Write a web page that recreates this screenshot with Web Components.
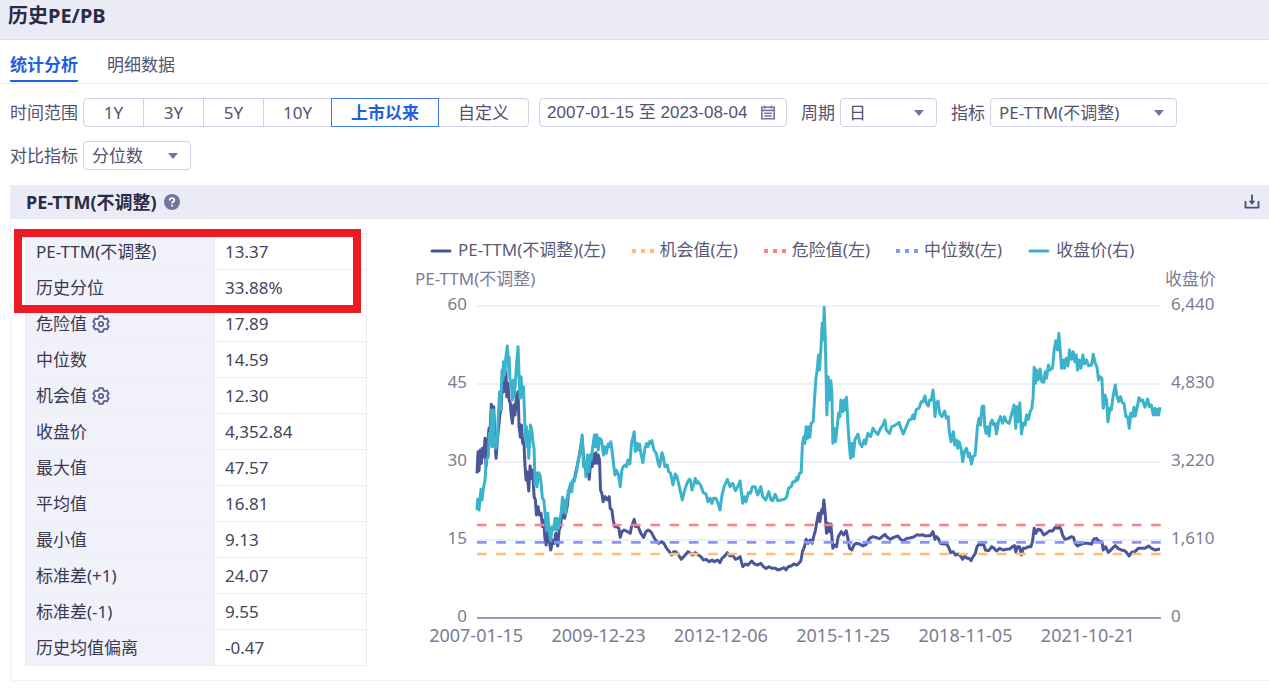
<!DOCTYPE html>
<html lang="zh-CN">
<head>
<meta charset="utf-8">
<meta name="viewport" content="width=device-width, initial-scale=1">
<title>历史PE/PB</title>
<style>
	body {
		margin: 0;
		background: #fff;
		color: #53536f;
		font: 17px/24px "Noto Sans", "Noto Sans CJK SC", sans-serif;
		--ink: #2b2b45;
		--blue: #1f5fe0;
		--line: #d2d0e6;
		--soft: #ebebf5;
		--icon: #74749f;
	}
</style>
</head>
<body>
<pe-page>
	<tab-bar slot="tabs" items="统计分析,明细数据" value="统计分析"></tab-bar>
	<range-group slot="filters" label="时间范围" items="1Y,3Y,5Y,10Y,上市以来,自定义" value="上市以来">
		<date-range value="2007-01-15 至 2023-08-04"></date-range>
	</range-group>
	<drop-down slot="filters" label="周期" value="日" style="--width:97px"></drop-down>
	<drop-down slot="filters" label="指标" value="PE-TTM(不调整)" style="--width:187px"></drop-down>
	<drop-down slot="filters" label="对比指标" value="分位数" style="--width:108px"></drop-down>
	<data-panel heading="PE-TTM(不调整)">
		<stat-table></stat-table>
		<trend-chart></trend-chart>
	</data-panel>
</pe-page>

<script>
class BaseElement extends HTMLElement {
	constructor() {
		super()
		this.attachShadow({mode:'open'})
	}
	connectedCallback() {
		this.shadowRoot.innerHTML = this.render()
	}
	attr(name) {
		return this.getAttribute(name) || ''
	}
	list(name) {
		return this.attr(name).split(',')
	}
}

customElements.define('pe-page', class extends BaseElement {
	render() {
		return /*html*/`
<style>
	:host { display: block; }
	header {
		padding: 4px 8px 11px;
		background: var(--soft);
		border-bottom: 1px solid #dfdfe9;
	}
	h1 {
		margin: 0;
		color: var(--ink);
		font-size: 20px;
		line-height: 24px;
	}
	.filters {
		display: flex;
		flex-wrap: wrap;
		gap: 14px;
		padding: 14px 10px 15px;
	}
	main { padding-left: 10px; }
</style>
<header><h1>历史PE/PB</h1></header>
<slot name="tabs"></slot>
<div class="filters"><slot name="filters"></slot></div>
<main><slot></slot></main>`
	}
})

customElements.define('tab-bar', class extends BaseElement {
	render() {
		return /*html*/`
<style>
	:host {
		display: block;
		border-bottom: 1px solid #ececf3;
	}
	nav {
		display: flex;
		gap: 29px;
		padding: 13px 10px 1px;
	}
	a {
		padding-bottom: 3px;
		border-bottom: 2px solid transparent;
		color: inherit;
		text-decoration: none;
	}
	a[aria-current] {
		color: var(--blue);
		border-color: var(--blue);
		border-radius: 1px;
		font-weight: bold;
	}
</style>
<nav>${this.list('items').map(t => `<a href="#"${
	t === this.attr('value') ? ' aria-current="page"' : ''}>${t}</a>`).join('')}</nav>`
	}
})

customElements.define('range-group', class extends BaseElement {
	render() {
		return /*html*/`
<style>
	:host {
		display: flex;
		align-items: center;
		gap: 10px;
	}
	.field {
		display: flex;
		align-items: center;
		gap: 5px;
	}
	.group { display: flex; }
	button {
		min-width: 61px;
		height: 29px;
		margin: 0 0 0 -1px;
		padding: 0 19px;
		border: 1px solid var(--line);
		background: #fff;
		color: inherit;
		font: inherit;
		line-height: 24px;
		white-space: nowrap;
	}
	button:first-child { margin-left: 0; border-radius: 4px 0 0 4px; }
	button:last-child { border-radius: 0 4px 4px 0; }
	button[aria-pressed=true] {
		position: relative;
		border-color: #3f7be0;
		color: var(--blue);
		font-weight: bold;
	}
</style>
<div class="field">
	<span id="label">${this.attr('label')}</span>
	<div class="group" role="group" aria-labelledby="label">${
		this.list('items').map(t => `<button type="button" aria-pressed="${t === this.attr('value')}">${t}</button>`).join('')
	}</div>
</div>
<slot></slot>`
	}
})

customElements.define('date-range', class extends BaseElement {
	render() {
		return /*html*/`
<style>
	:host {
		box-sizing: border-box;
		display: flex;
		align-items: center;
		width: 248px;
		height: 29px;
		padding: 0 10px 0 7px;
		border: 1px solid var(--line);
		border-radius: 4px;
	}
	input {
		flex: 1;
		min-width: 0;
		padding: 0;
		border: 0;
		outline: 0;
		background: none;
		color: inherit;
		font: 17px/24px "Liberation Sans", "Noto Sans CJK SC", sans-serif;
	}
	svg { width: 16px; height: 16px; }
</style>
<input type="text" aria-label="日期范围" value="${this.attr('value')}">
<svg viewBox="0 0 16 16" fill="none" stroke="var(--icon)">
	<path stroke-width="1.6" d="M1.800 2.300h12.400v11.400H1.800z"/>
	<path stroke-width="1.600" d="M1.800 5.400h12.400M4.700 .6v3M11.300 .6v3M4.200 8.300h7.600M4.200 11h7.600"/>
</svg>`
	}
})

customElements.define('drop-down', class extends BaseElement {
	render() {
		return /*html*/`
<style>
	:host {
		display: flex;
		align-items: center;
		gap: 5px;
	}
	.box {
		display: grid;
		align-items: center;
		width: var(--width);
	}
	select, svg { grid-area: 1/1; }
	select {
		appearance: none;
		width: 100%;
		height: 29px;
		padding: 0 26px 0 8px;
		border: 1px solid var(--line);
		border-radius: 4px;
		background: #fff;
		color: inherit;
		font: inherit;
		line-height: 24px;
	}
	svg {
		justify-self: end;
		width: 10px;
		height: 6px;
		margin-right: 13px;
		fill: var(--icon);
		pointer-events: none;
	}
</style>
<label for="select">${this.attr('label')}</label>
<div class="box">
	<select id="select"><option>${this.attr('value')}</option></select>
	<svg viewBox="0 0 10 6"><path d="M0 0h10L5 6z"/></svg>
</div>`
	}
})

customElements.define('data-panel', class extends BaseElement {
	render() {
		return /*html*/`
<style>
	:host {
		display: block;
		border: 1px solid #f0f0f7;
		border-width: 0 0 1px 1px;
		border-radius: 0 0 0 4px;
	}
	header {
		display: flex;
		align-items: center;
		gap: 7px;
		height: 34px;
		padding: 0 9px 0 15px;
		background: var(--soft);
	}
	h2 {
		margin: 0;
		color: var(--ink);
		font-size: 18px;
		line-height: 24px;
	}
	button {
		display: flex;
		padding: 0;
		border: 0;
		background: none;
	}
	button:last-child { margin-left: auto; }
	svg { width: 16px; height: 16px; }
	.body {
		display: flex;
		align-items: flex-start;
	}
</style>
<header>
	<h2>${this.attr('heading')}</h2>
	<button type="button" aria-label="说明">
		<svg viewBox="0 0 16 16">
			<circle cx="8" cy="8" r="8" fill="var(--icon)"/>
			<path d="M5.7 6.4C5.7 4.9 6.7 4.2 8 4.2s2.3.8 2.3 2c0 1.6-2.2 1.6-2.2 3.2" fill="none" stroke="#fff" stroke-width="1.7"/>
			<path d="M7.2 10.7h1.8v1.7H7.2z" fill="#fff"/>
		</svg>
	</button>
	<button type="button" aria-label="下载">
		<svg viewBox="0 0 16 16" fill="none" stroke="#4c4c80" stroke-width="1.8">
			<path d="M1.500 7v6.700h13V7M8 .5v8"/>
			<path d="M4.700 6.800h6.600L8 11z" fill="#4c4c80" stroke="none"/>
		</svg>
	</button>
</header>
<div class="body"><slot></slot></div>`
	}
})

const GEAR = /*html*/`
<button type="button" aria-label="设置">
	<svg viewBox="0 0 18 18" fill="none" stroke="#5f5f8e" stroke-width="1.8" stroke-linejoin="round">
		<path d="M7.1 1.2h3.8l.6 2.2 1.2.7 2.2-.6 1.9 3.2-1.6 1.6v1.4l1.6 1.6-1.9 3.2-2.2-.6-1.2.7-.6 2.2H7.1l-.6-2.2-1.2-.7-2.2.6-1.9-3.2 1.6-1.6V8.3L1.200 6.700l1.900-3.200 2.200.6 1.200-.7z"/>
		<circle cx="9" cy="9" r="2.2"/>
	</svg>
</button>`

customElements.define('stat-table', class extends BaseElement {
	static ROWS = [
		['PE-TTM(不调整)', '13.37'],
		['历史分位', '33.88%'],
		['危险值', '17.89', GEAR],
		['中位数', '14.59'],
		['机会值', '12.30', GEAR],
		['收盘价', '4,352.84'],
		['最大值', '47.57'],
		['平均值', '16.81'],
		['最小值', '9.13'],
		['标准差(+1)', '24.07'],
		['标准差(-1)', '9.55'],
		['历史均值偏离', '-0.47']
	]
	rows() {
		return this.constructor.ROWS.map(([name, value, icon='']) =>
			`<tr><th scope="row"><div class="name">${name}${icon}</div></th><td>${value}</td></tr>`).join('')
	}
	render() {
		return /*html*/`
<style>
	:host {
		position: relative;
		display: block;
		flex: none;
		width: 342px;
		margin: 14px 0 14px 14px;
	}
	table {
		width: 100%;
		table-layout: fixed;
		border-collapse: collapse;
		color: #45455f;
	}
	th, td {
		height: 35px;
		padding: 0 10px;
		border: 1px solid #ececf5;
		text-align: left;
		font-weight: normal;
	}
	th {
		width: 168px;
		background: #f1f1f9;
		color: #393952;
	}
	.name {
		display: flex;
		align-items: center;
		gap: 5px;
	}
	button {
		display: flex;
		padding: 0;
		border: 0;
		background: none;
	}
	svg { width: 18px; height: 18px; }
	/* marker drawn over the first two rows */
	.marker {
		position: absolute;
		inset: -4px 6px auto -11px;
		height: 68px;
		border: 8px solid #ed1c24;
		pointer-events: none;
	}
</style>
<table>${this.rows()}</table>
<div class="marker"></div>`
	}
})

// [x offset, points], three chart units to a pixel
const PE = [
	[-54, '54,520 57,455 60,512 64,450 67,490 70,445 74,470 78,415 81,500 85,440 90,385 93,390 97,313 100,345 104,320 107,400 111,475 115,420 119,380 123,340 126,330 130,240 134,275 137,240 141,215 143,290 147,250 150,300 154,310 156,340 160,370 164,315 168,345 172,290 177,275 180,380 184,412 187,375 191,430 194,415 198,500 201,540 204,515 209,573 213,498 217,535 221,510 225,590 229,600 232,645 237,620 241,645 246,640 250,680 254,660 257,710 261,735 266,695 270,720 275,750 281,720 286,730 290,700 296,738 300,690 304,680 308,640 312,625 316,655 320,640 325,615 328,580 334,555 345,540 358,480 369,415 375,500 385,490 390,538 394,490 399,500 403,462 406,490 410,458 413,490 417,465 421,480 424,570 428,580 432,605 438,590 444,600 450,590 453,625 458,630 462,660 467,680 473,680 479,685 483,712 488,695 495,690 505,695 513,700 517,680 525,658 529,680 536,678 545,700 553,712 560,695 567,690 575,695 583,710 590,722 598,730 607,725 614,730 622,745 630,755 637,765 643,755 649,755 656,762 666,778 675,768 686,755'],
	[636, '3,760 10,765 18,758 27,765 35,770 42,780 50,778 60,785 68,780 75,785 85,780 92,788 98,775 106,768 114,758 122,768 130,765 138,778 145,775 152,770 160,800 168,792 176,795 187,783 195,792 205,795 214,790 222,800 230,806 238,800 248,805 258,805 265,810 275,807 283,803 290,810 296,800 305,798 313,792 322,795 328,790 334,783 339,755 345,740 350,718 356,730 362,720 368,730 372,712 378,690 383,660 387,640 391,665 396,630 399,640 403,600 407,640 411,700 415,670 419,695 424,672 430,745 436,735 441,740 446,710 455,695 462,705 470,692 475,715 480,745 487,750 493,735 500,730 510,732 520,738 530,733 540,715 550,710 560,713 570,716 580,708 586,703 593,712 602,718 612,712 625,708 633,718 641,722 652,715 660,714 672,711 682,704 690,706 700,704 706,708 716,707'],
	[1326, '32,707 40,695 46,718 50,710 56,715 62,730 72,732 80,732 86,740 93,758 100,755 108,765 116,762 124,770 129,778 135,768 142,775 148,775 154,782 160,770 166,762 172,740 178,732 184,735 190,728 197,750 207,752 216,740 223,745 230,753 240,745 250,750 260,748 270,747 278,740 284,737 288,756 293,740 299,740 305,765 310,745 317,745 325,740 333,740 338,725 343,685 348,700 354,688 363,690 372,705 382,698 390,692 398,693 406,682 413,685 418,678 424,690 428,705 435,718 445,715 455,710 461,712 466,730 473,738 483,733 493,730 503,730 515,732 522,717 530,715 538,725 546,725 550,750 557,740 565,757 573,750 580,742 586,737 594,745 604,750 614,752 620,758 627,768 635,757 645,755 655,745 665,745 675,745 686,738 695,745 705,750 720,747']
]
const CLOSE = [
	[-54, '54,630 56,598 60,630 66,568 69,600 73,565 78,540 82,480 88,470 91,400 94,430 97,330 99,440 103,330 107,440 110,445 114,430 118,340 122,275 125,330 129,210 132,240 133,185 137,225 140,175 145,138 149,210 150,170 153,240 157,250 160,300 163,240 165,290 169,250 172,200 177,140 180,230 183,295 186,230 189,290 193,260 196,330 199,420 202,380 204,440 206,395 209,475 214,375 218,390 222,430 225,445 228,555 232,520 234,560 238,518 243,525 246,550 250,595 254,600 258,640 262,690 266,640 270,690 275,722 279,680 283,690 288,655 292,690 294,655 298,685 302,660 306,640 310,592 312,635 317,600 319,640 324,600 328,570 330,580 334,550 338,575 341,540 345,545 352,515 358,475 363,460 369,405 373,500 377,485 380,530 385,465 389,515 393,465 396,480 400,445 406,404 409,440 413,404 417,450 421,415 427,420 433,465 437,440 441,460 447,432 451,440 455,425 460,465 467,525 471,510 478,525 483,560 488,510 492,500 498,495 502,500 506,480 512,492 517,430 525,395 528,455 533,430 536,450 541,432 545,460 551,488 557,445 562,430 566,440 571,425 575,430 578,422 584,450 591,460 597,490 601,500 608,458 612,470 617,500 624,495 628,515 634,520 641,555 648,522 653,530 660,560 669,600 675,575 683,550 690,538'],
	[636, '3,540 8,570 14,550 18,535 22,550 27,545 35,558 42,578 50,582 56,605 62,595 68,610 72,595 80,595 86,610 92,630 98,585 105,558 114,538 122,560 130,550 138,572 145,560 152,543 160,610 165,590 170,605 177,578 183,580 189,560 197,560 205,585 214,560 220,590 229,600 238,575 245,600 250,602 257,583 265,602 275,600 285,598 292,590 297,565 305,560 311,545 317,545 322,533 325,540 330,520 335,518 339,430 343,410 346,430 350,380 354,415 358,380 361,412 365,370 371,365 375,300 379,240 384,200 387,165 390,210 394,150 398,70 401,120 404,22 407,110 410,240 412,345 416,230 420,300 424,242 427,280 430,430 434,385 438,425 443,380 447,340 451,350 454,300 460,335 464,300 468,330 471,292 475,370 479,430 483,475 487,430 491,470 496,420 501,410 505,402 511,430 517,440 524,420 528,432 535,400 543,410 550,385 557,395 565,403 573,385 580,375 586,360 590,390 600,400 606,380 615,377 628,367 634,385 641,402 650,380 658,360 665,358 670,345 674,357 680,328 688,325 695,305 700,305 706,288 710,310 716,318'],
	[1326, '30,300 35,300 40,270 43,300 46,350 50,310 55,303 60,340 67,350 75,333 80,355 86,350 88,390 94,425 101,395 105,435 110,420 114,445 118,425 124,445 129,485 134,455 140,445 146,470 150,460 155,492 160,470 166,465 170,420 173,380 178,355 182,375 187,320 192,318 195,380 199,400 203,380 208,408 212,370 217,360 222,375 226,370 230,402 236,365 242,350 248,370 254,350 260,365 268,370 275,345 283,315 288,385 292,320 296,365 300,308 305,402 310,370 316,375 320,345 326,358 331,335 336,325 340,290 343,202 347,250 350,210 355,240 361,207 366,245 372,247 376,215 380,235 386,195 390,210 398,205 403,150 408,122 413,150 417,100 421,150 425,205 430,180 434,205 439,175 444,198 449,150 455,178 460,155 465,185 469,165 473,210 478,180 483,205 489,165 494,192 500,180 506,197 515,195 520,163 526,190 531,200 536,240 540,230 546,235 550,325 555,285 560,300 564,365 570,325 574,330 580,285 586,255 590,285 596,305 602,290 607,308 612,310 618,350 623,350 628,385 632,340 637,350 642,322 646,348 652,320 657,293 664,303 668,300 675,322 683,297 688,320 694,315 700,345 705,325 708,345 712,328 716,345 720,322']
]

customElements.define('trend-chart', class extends BaseElement {
	static SERIES = [
		['PE-TTM(不调整)(左)', '#4a5699'],
		['机会值(左)', '#ffbe73', true],
		['危险值(左)', '#ff8085', true],
		['中位数(左)', '#8496ff', true],
		['收盘价(右)', '#3bb3cb']
	]
	points(chunks) {
		return chunks.map(([dx, text]) => text.split(' ').map(p => {
			const [x, y] = p.split(',').map(Number)
			return `${x+dx},${y}`
		}).join(' ')).join(' ')
	}
	spans(values) {
		return values.map(v => `<span>${v}</span>`).join('')
	}
	render() {
		const series = this.constructor.SERIES
		const legend = series.map(([name, color, dotted]) => `
	<li><svg viewBox="0 0 22 24" stroke="${color}">${dotted
		? '<path stroke-width="4" stroke-dasharray="4 5" d="M0 13h22"/>'
		: '<path stroke-width="3" stroke-linecap="round" d="M2 13h18"/>'
	}</svg>${name}</li>`).join('')
		return /*html*/`
<style>
	:host {
		display: block;
		flex: 1;
		min-width: 0;
		padding: 19px 53px 0 48px;
		color: #7c7c94;
	}
	ul {
		display: flex;
		gap: 26px;
		margin: 0 0 5px 15px;
		padding: 0;
		list-style: none;
		color: #5a5a78;
		white-space: nowrap;
	}
	li {
		display: flex;
		gap: 6px;
	}
	li svg { width: 22px; height: 24px; }
	.names {
		display: flex;
		justify-content: space-between;
		margin-bottom: 3px;
	}
	.plot {
		display: grid;
		grid-template-columns: 52px 1fr 45px;
		column-gap: 10px;
		height: 332px;
	}
	.axis {
		display: flex;
		flex-direction: column;
		justify-content: space-between;
		line-height: 20px;
	}
	.left { text-align: right; }
	.plot svg {
		width: 100%;
		height: 312px;
		margin-top: 12px;
		overflow: visible;
		fill: none;
	}
	.plot path, polyline { vector-effect: non-scaling-stroke; }
	polyline { stroke-width: 3; stroke-linejoin: round; }
	.dash { stroke-width: 2.6; stroke-dasharray: 9.6 9.66; }
	.dates {
		display: grid;
		grid-template-columns: repeat(6, 1fr);
		margin-right: 67px;
		font-size: 18px;
		line-height: 18px;
		text-align: center;
		white-space: nowrap;
	}
</style>
<ul>${legend}</ul>
<div class="names"><span>PE-TTM(不调整)</span><span>收盘价</span></div>
<div class="plot">
	<div class="axis left">${this.spans([60, 45, 30, 15, 0])}</div>
	<svg viewBox="0 18 2049 936" preserveAspectRatio="none">
		<path stroke="#efeff7" stroke-width="2" d="M0 18h2049M0 252h2049M0 486h2049M0 720h2049"/>
		<path stroke="#9896bd" stroke-width="2" d="M0 954h2049"/>
		<polyline stroke="${series[0][1]}" points="${this.points(PE)}"/>
		<path class="dash" stroke="${series[1][1]}" d="M0 762h2049"/>
		<path class="dash" stroke="${series[2][1]}" d="M0 675h2049"/>
		<path class="dash" stroke="${series[3][1]}" d="M0 727h2049"/>
		<polyline stroke="${series[4][1]}" points="${this.points(CLOSE)}"/>
	</svg>
	<div class="axis">${this.spans(['6,440', '4,830', '3,220', '1,610', '0'])}</div>
</div>
<div class="dates">${this.spans(['2007-01-15', '2009-12-23', '2012-12-06', '2015-11-25', '2018-11-05', '2021-10-21'])}</div>`
	}
})
</script>
</body>
</html>
